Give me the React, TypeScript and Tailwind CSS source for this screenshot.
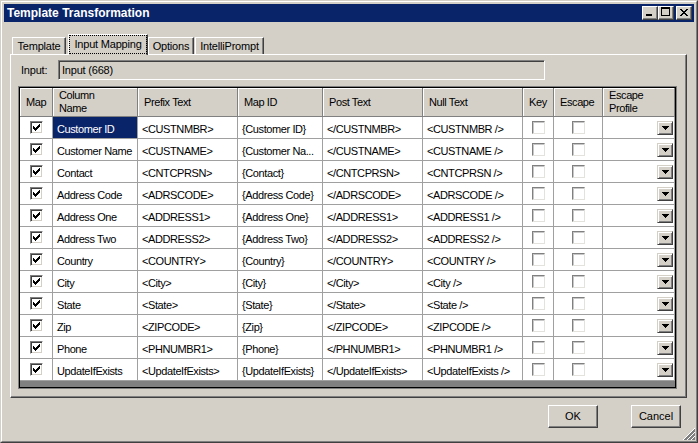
import React from 'react'

type Row = [string, string, string, string, string]

const rows: Row[] = [
  ['Customer ID', '<CUSTNMBR>', '{Customer ID}', '</CUSTNMBR>', '<CUSTNMBR />'],
  ['Customer Name', '<CUSTNAME>', '{Customer Na...', '</CUSTNAME>', '<CUSTNAME />'],
  ['Contact', '<CNTCPRSN>', '{Contact}', '</CNTCPRSN>', '<CNTCPRSN />'],
  ['Address Code', '<ADRSCODE>', '{Address Code}', '</ADRSCODE>', '<ADRSCODE />'],
  ['Address One', '<ADDRESS1>', '{Address One}', '</ADDRESS1>', '<ADDRESS1 />'],
  ['Address Two', '<ADDRESS2>', '{Address Two}', '</ADDRESS2>', '<ADDRESS2 />'],
  ['Country', '<COUNTRY>', '{Country}', '</COUNTRY>', '<COUNTRY />'],
  ['City', '<City>', '{City}', '</City>', '<City />'],
  ['State', '<State>', '{State}', '</State>', '<State />'],
  ['Zip', '<ZIPCODE>', '{Zip}', '</ZIPCODE>', '<ZIPCODE />'],
  ['Phone', '<PHNUMBR1>', '{Phone}', '</PHNUMBR1>', '<PHNUMBR1 />'],
  ['UpdateIfExists', '<UpdateIfExists>', '{UpdateIfExists}', '</UpdateIfExists>', '<UpdateIfExists />'],
]

// classic 7x7 check glyph, one rect per run of pixels
const checkPixels = [
  [6, 0, 1], [5, 1, 2], [0, 2, 1], [4, 2, 3], [0, 3, 2], [3, 3, 3],
  [0, 4, 5], [1, 5, 3], [2, 6, 1],
]

function MapCheck() {
  return (
    <div className="flex h-[13px] w-[13px] items-center justify-center border border-t-[#808080] border-l-[#808080] border-r-white border-b-white bg-white shadow-[inset_1px_1px_0_#404040,inset_-1px_-1px_0_#d4d0c8]">
      <svg width="7" height="7" viewBox="0 0 7 7" shapeRendering="crispEdges">
        {checkPixels.map(([x, y, w], i) => (
          <rect key={i} x={x} y={y} width={w} height={1} fill="#000" />
        ))}
      </svg>
    </div>
  )
}

function EmptyCheck() {
  return (
    <div className="h-[13px] w-[13px] border border-t-[#808080] border-l-[#808080] border-r-[#e4e2dc] border-b-[#e4e2dc] bg-white shadow-[inset_1px_1px_0_#c8c8c8]" />
  )
}

function ComboButton() {
  return (
    <div className="flex h-[14px] w-[16px] items-center justify-center border border-t-[#d4d0c8] border-l-[#d4d0c8] border-r-[#404040] border-b-[#404040] bg-[#d4d0c8] shadow-[inset_1px_1px_0_white,inset_-1px_-1px_0_#808080]">
      <svg width="7" height="4" viewBox="0 0 7 4" shapeRendering="crispEdges">
        <rect x="0" y="0" width="7" height="1" fill="#000" />
        <rect x="1" y="1" width="5" height="1" fill="#000" />
        <rect x="2" y="2" width="3" height="1" fill="#000" />
        <rect x="3" y="3" width="1" height="1" fill="#000" />
      </svg>
    </div>
  )
}

function CaptionButton({ kind, className = '' }: { kind: 'min' | 'max' | 'close'; className?: string }) {
  return (
    <div
      className={`h-[14px] w-[16px] border border-t-white border-l-white border-r-[#404040] border-b-[#404040] bg-[#d4d0c8] shadow-[inset_-1px_-1px_0_#808080] ${className}`}
    >
      <svg width="14" height="12" viewBox="0 0 14 12" shapeRendering="crispEdges">
        {kind === 'min' && <rect x="3" y="7" width="6" height="2" fill="#000" />}
        {kind === 'max' && (
          <g fill="#000">
            <rect x="2" y="0" width="9" height="2" />
            <rect x="2" y="0" width="1" height="9" />
            <rect x="10" y="0" width="1" height="9" />
            <rect x="2" y="8" width="9" height="1" />
          </g>
        )}
        {kind === 'close' && (
          <g fill="#000">
            <rect x="3" y="2" width="2" height="1" />
            <rect x="9" y="2" width="2" height="1" />
            <rect x="4" y="3" width="2" height="1" />
            <rect x="8" y="3" width="2" height="1" />
            <rect x="5" y="4" width="4" height="1" />
            <rect x="6" y="5" width="2" height="1" />
            <rect x="5" y="6" width="4" height="1" />
            <rect x="4" y="7" width="2" height="1" />
            <rect x="8" y="7" width="2" height="1" />
            <rect x="3" y="8" width="2" height="1" />
            <rect x="9" y="8" width="2" height="1" />
          </g>
        )}
      </svg>
    </div>
  )
}

function Tab({ label, selected = false, className = '' }: { label: string; selected?: boolean; className?: string }) {
  if (selected) {
    return (
      <div
        className={`relative z-10 -mb-px flex h-[21px] items-center justify-center border-t border-l border-t-white border-l-white border-r border-r-[#404040] bg-[#d4d0c8] shadow-[inset_-1px_0_0_#808080] tracking-[-0.2px] ${className}`}
      >
        <div className="absolute inset-x-0 top-0 bottom-[1px] border border-dotted border-black" />
        <span className="-mt-[2px]">{label}</span>
      </div>
    )
  }
  return (
    <div
      className={`flex h-[17px] items-center justify-center border-t border-l border-t-white border-l-white border-r border-r-[#404040] shadow-[inset_-1px_0_0_#808080] tracking-[-0.2px] ${className}`}
    >
      {label}
    </div>
  )
}

function PushButton({ label }: { label: string }) {
  return (
    <div className="flex h-[23px] w-[50px] items-center justify-center border border-t-white border-l-white border-r-[#404040] border-b-[#404040] bg-[#d4d0c8] shadow-[inset_-1px_-1px_0_#808080]">
      {label}
    </div>
  )
}

const headCell =
  'flex items-center border-r border-r-[#808080] border-b border-b-[#808080] bg-[#d4d0c8] pl-[6px] leading-[13px] shadow-[inset_1px_1px_0_white] tracking-[-0.4px]'
const cell = 'flex items-center border-r border-b border-[#a0a0a0] truncate tracking-[-0.4px]'
const textCell = `${cell} bg-white pl-[4px] pt-[3px]`

export default function App() {
  return (
    <div className="relative h-[443px] w-[698px] border border-t-[#d4d0c8] border-l-[#d4d0c8] border-r-[#404040] border-b-[#404040] bg-[#d4d0c8] font-['Liberation_Sans',Arial,sans-serif] text-[11px] text-black">
      <div className="flex h-full flex-col border border-t-white border-l-white border-r-[#808080] border-b-[#808080] p-[2px]">
        {/* Title bar */}
        <div className="flex h-[18px] shrink-0 items-center bg-[#0a246a] pl-[3px] pr-[2px]">
          <span className="flex-1 text-[12px] font-bold text-white">Template Transformation</span>
          <CaptionButton kind="min" />
          <CaptionButton kind="max" />
          <CaptionButton kind="close" className="ml-[2px]" />
        </div>

        {/* Tab control */}
        <div className="mt-[12px] ml-[6px] w-[677px]">
          <div className="flex h-[20px] items-end pl-[2px]">
            <Tab label="Template" className="w-[54px]" />
            <Tab label="Input Mapping" selected className="ml-[2px] w-[80px]" />
            <Tab label="Options" className="w-[46px]" />
            <Tab label="IntelliPrompt" className="ml-[1px] w-[69px]" />
          </div>

          <div className="h-[344px] border border-t-white border-l-white border-r-[#404040] border-b-[#404040] pt-[5px] pl-[7px] shadow-[inset_-1px_-1px_0_#808080]">
            {/* Input row */}
            <div className="flex h-[20px] items-center">
              <span className="w-[40px] pl-[3px] tracking-[-0.2px]">Input:</span>
              <div className="flex h-[20px] w-[487px] items-center border border-t-[#808080] border-l-[#808080] border-r-white border-b-white pl-[3px] shadow-[inset_1px_1px_0_#404040,inset_-1px_-1px_0_#d4d0c8] tracking-[-0.2px]">
                Input (668)
              </div>
            </div>

            {/* Grid */}
            <div className="mt-[6px] h-[303px] w-[659px] border border-[#808080]">
              <div className="h-full w-full border border-black bg-[#808080]">
                <div className="grid grid-cols-[33px_85px_100px_85px_100px_100px_31px_49px_72px] grid-rows-[29px] auto-rows-[22px]">
                  {/* Header */}
                  <div className={headCell}>Map</div>
                  <div className={headCell}>
                    Column
                    <br />
                    Name
                  </div>
                  <div className={headCell}>Prefix Text</div>
                  <div className={headCell}>Map ID</div>
                  <div className={headCell}>Post Text</div>
                  <div className={headCell}>Null Text</div>
                  <div className={headCell}>Key</div>
                  <div className={headCell}>Escape</div>
                  <div className={headCell}>
                    Escape
                    <br />
                    Profile
                  </div>

                  {/* Rows */}
                  {rows.map((r, i) => (
                    <React.Fragment key={r[0]}>
                      <div className={`${cell} justify-center bg-white`}>
                        <MapCheck />
                      </div>
                      {i === 0 ? (
                        <div className={`${cell} bg-[#0a246a] bg-clip-padding pl-[4px] pt-[3px] text-white`}>{r[0]}</div>
                      ) : (
                        <div className={textCell}>{r[0]}</div>
                      )}
                      <div className={textCell}>{r[1]}</div>
                      <div className={textCell}>{r[2]}</div>
                      <div className={textCell}>{r[3]}</div>
                      <div className={textCell}>{r[4]}</div>
                      <div className={`${cell} justify-center bg-white`}>
                        <EmptyCheck />
                      </div>
                      <div className={`${cell} justify-center bg-white`}>
                        <EmptyCheck />
                      </div>
                      <div className={`${cell} justify-end bg-white pr-[1px]`}>
                        <ComboButton />
                      </div>
                    </React.Fragment>
                  ))}
                </div>
              </div>
            </div>
          </div>
        </div>

        {/* Dialog buttons */}
        <div className="mt-[7px] flex justify-end gap-[33px] pr-[13px]">
          <PushButton label="OK" />
          <PushButton label="Cancel" />
        </div>
      </div>

      {/* size grip */}
      <svg
        className="absolute right-[2px] bottom-[2px]"
        width="12"
        height="12"
        viewBox="0 0 12 12"
        shapeRendering="crispEdges"
      >
        {[0, 4, 8].map((o) => (
          <g key={o}>
            <line x1={o + 0.5} y1="12" x2="12" y2={o + 0.5} stroke="#ffffff" strokeWidth="1" />
            <line x1={o + 1.5} y1="12" x2="12" y2={o + 1.5} stroke="#808080" strokeWidth="1" />
            <line x1={o + 2.5} y1="12" x2="12" y2={o + 2.5} stroke="#808080" strokeWidth="1" />
          </g>
        ))}
      </svg>
    </div>
  )
}
